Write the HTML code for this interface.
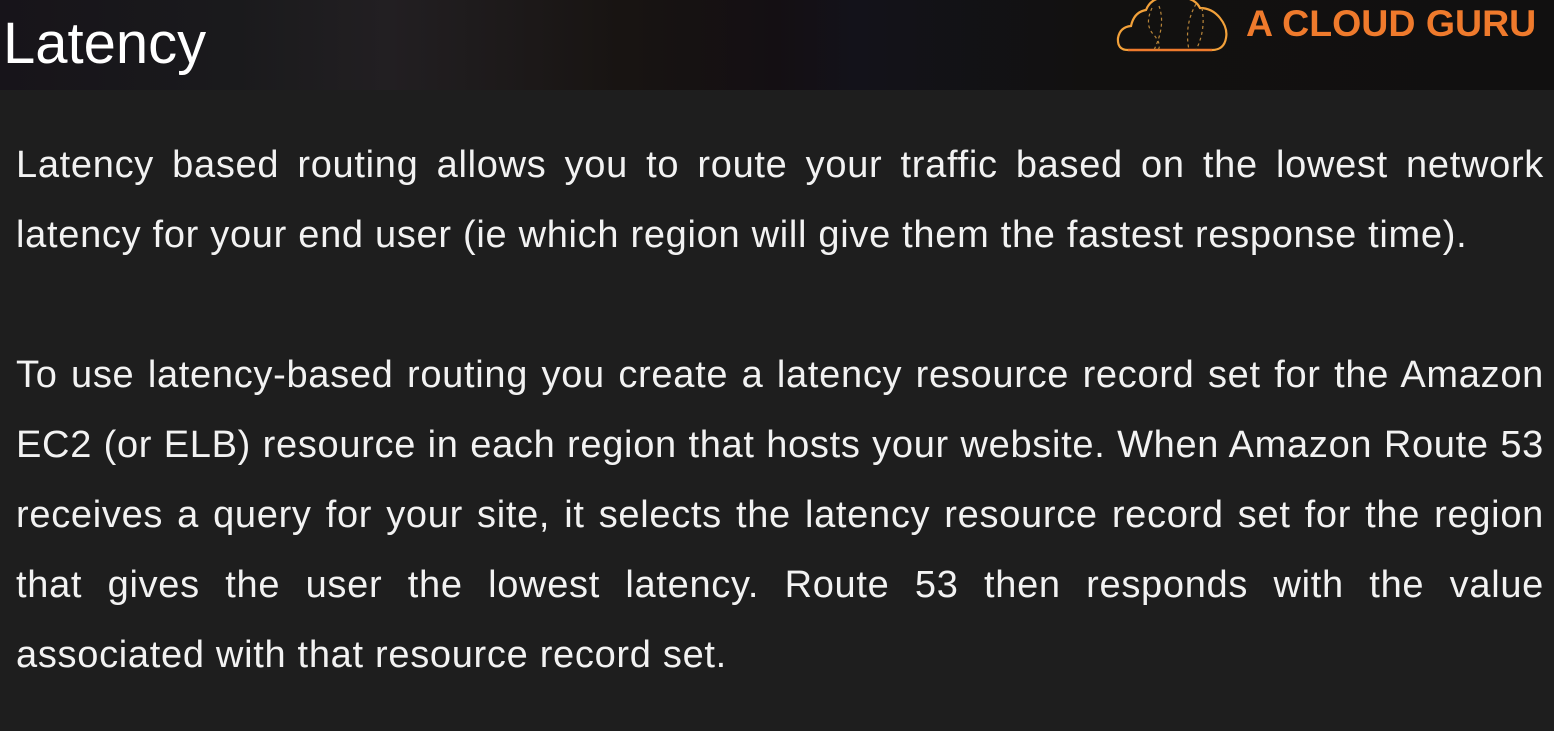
<!DOCTYPE html>
<html><head><meta charset="utf-8"><style>
html,body{margin:0;padding:0;width:1554px;height:731px;overflow:hidden;background:#1e1e1e;}
.hdr{position:absolute;left:0;top:0;width:1554px;height:90px;background:linear-gradient(90deg,#17141a 0%,#1a1a1c 15%,#221f22 25%,#181412 40%,#140f13 50%,#13121a 55%,#121110 70%,#111010 100%);}
.title{position:absolute;left:3px;top:10px;font:58px "Liberation Sans",sans-serif;color:#fff;}
.logo{position:absolute;left:1246px;top:2px;font:bold 37.5px "Liberation Sans",sans-serif;color:#ef7a2c;}
.txt{position:absolute;left:16px;width:1528px;font:38px "Liberation Sans",sans-serif;letter-spacing:0.7px;color:#f2f2f2;}
.l{display:block;height:70px;line-height:70px;text-align:justify;text-align-last:justify;white-space:nowrap;}
.l.last{text-align-last:left;}
</style></head><body>
<div class="hdr"></div>
<div class="title">Latency</div>
<svg style="position:absolute;left:1114px;top:0" width="118" height="54" viewBox="0 0 118 54">
<path d="M14 50 Q3 50 4 38 Q6 27 17 26 Q20 12 32 10 Q36 0 46 -2 M72 -2 Q82 0 86 8 Q98 8 106 18 Q114 28 112 38 Q110 50 98 50" fill="none" stroke="#f2a13a" stroke-width="2.2"/>
<path d="M14 50 L98 50" stroke="#ef7a2c" stroke-width="2.5"/>
<path d="M38 8 Q30 25 40 35 Q48 45 44 50 M45 6 Q52 25 40 50 M82 4 Q70 25 75 50 M88 8 Q92 30 82 50" fill="none" stroke="#b9863a" stroke-width="1.2" stroke-dasharray="3 3"/>
</svg>
<div class="logo">A CLOUD GURU</div>
<div class="txt" style="top:130px">
<span class="l">Latency based routing allows you to route your traffic based on the lowest network</span>
<span class="l last">latency for your end user (ie which region will give them the fastest response time).</span>
</div>
<div class="txt" style="top:340px">
<span class="l">To use latency-based routing you create a latency resource record set for the Amazon</span>
<span class="l">EC2 (or ELB) resource in each region that hosts your website. When Amazon Route 53</span>
<span class="l">receives a query for your site, it selects the latency resource record set for the region</span>
<span class="l">that gives the user the lowest latency. Route 53 then responds with the value</span>
<span class="l last">associated with that resource record set.</span>
</div>
</body></html>
